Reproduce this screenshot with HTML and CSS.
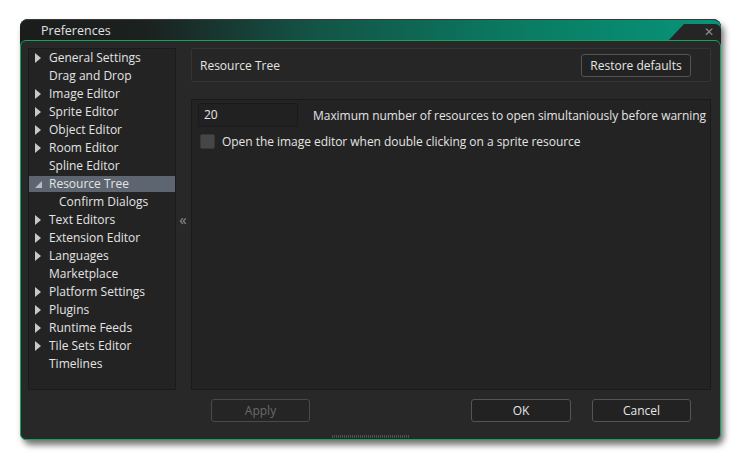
FILE: index.html
```html
<!DOCTYPE html>
<html>
<head>
<meta charset="utf-8">
<link rel="stylesheet" href="styles.css">
</head>
<body>
<div class="window">
  <div class="titlebar">
    <span class="title">Preferences</span>
    <div class="notch"><span class="close">✕</span></div>
  </div>
  <div class="frame">
    <div class="main">
      <div class="tree">
        <div class="row"><span class="tri closed"></span>General Settings</div>
        <div class="row"><span class="tri none"></span>Drag and Drop</div>
        <div class="row"><span class="tri closed"></span>Image Editor</div>
        <div class="row"><span class="tri closed"></span>Sprite Editor</div>
        <div class="row"><span class="tri closed"></span>Object Editor</div>
        <div class="row"><span class="tri closed"></span>Room Editor</div>
        <div class="row"><span class="tri none"></span>Spline Editor</div>
        <div class="row selected"><span class="tri open"></span>Resource Tree</div>
        <div class="row child"><span class="tri none"></span>Confirm Dialogs</div>
        <div class="row"><span class="tri closed"></span>Text Editors</div>
        <div class="row"><span class="tri closed"></span>Extension Editor</div>
        <div class="row"><span class="tri closed"></span>Languages</div>
        <div class="row"><span class="tri none"></span>Marketplace</div>
        <div class="row"><span class="tri closed"></span>Platform Settings</div>
        <div class="row"><span class="tri closed"></span>Plugins</div>
        <div class="row"><span class="tri closed"></span>Runtime Feeds</div>
        <div class="row"><span class="tri closed"></span>Tile Sets Editor</div>
        <div class="row"><span class="tri none"></span>Timelines</div>
      </div>
      <div class="splitter">«</div>
      <div class="right">
        <div class="header">
          <span class="header-title">Resource Tree</span>
          <button class="btn restore">Restore defaults</button>
        </div>
        <div class="content">
          <div class="setting">
            <div class="input">20</div>
            <span class="label">Maximum number of resources to open simultaniously before warning</span>
          </div>
          <div class="setting check-row">
            <span class="checkbox"></span>
            <span class="label">Open the image editor when double clicking on a sprite resource</span>
          </div>
        </div>
      </div>
    </div>
    <div class="buttons">
      <button class="btn apply">Apply</button>
      <div class="spacer"></div>
      <button class="btn ok">OK</button>
      <button class="btn cancel">Cancel</button>
    </div>
    <div class="grip"></div>
  </div>
</div>
</body>
</html>
```
FILE: styles.css
```css
* { box-sizing: border-box; }
html, body { margin: 0; padding: 0; background: #ffffff; }
body {
  font-family: "Open Sans", "Noto Sans", sans-serif;
  font-size: 12px;
  color: #e2e2e2;
  width: 741px;
  height: 460px;
  overflow: hidden;
}
.window {
  position: relative;
  margin: 19px 0 0 20px;
  width: 701px;
  height: 421px;
  border-radius: 8px;
  background: #1c1f1e;
  box-shadow: 3px 5px 6px rgba(0,0,0,0.55);
}
.titlebar {
  position: relative;
  height: 22px;
  border-radius: 8px 8px 0 0;
  border-top: 1px solid #3a3a3a;
  background: linear-gradient(to right, #1a1d1c 0%, #1b211f 18%, #135446 42%, #0a7c62 72%, #07957a 100%);
  display: flex;
  align-items: center;
  padding-left: 21px;
}
.title {
  font-size: 12.5px;
  color: #e0e0e0;
  line-height: 20px;
}
.notch {
  position: absolute;
  right: 0;
  top: 4px;
  width: 54px;
  height: 18px;
  background: #252525;
  clip-path: polygon(17px 0, 100% 0, 100% 100%, 0 100%);
  border-top-right-radius: 6px;
}
.close {
  position: absolute;
  right: 7px;
  top: 1px;
  font-size: 12px;
  color: #8a8a8a;
  font-family: "DejaVu Sans", sans-serif;
}
.frame {
  position: relative;
  height: 400px;
  margin-top: -1px;
  border: 1px solid #18a15f;
  border-radius: 6px;
  background: #282828;
  padding: 7px 9px 0 7px;
}
.main {
  display: flex;
  height: 342px;
}
.tree {
  flex: none;
  width: 148px;
  background: #232323;
  border: 1px solid #1b1b1b;
  padding-top: 1px;
}
.row {
  display: flex;
  align-items: center;
  height: 16px;
  margin-bottom: 2px;
  padding-left: 6px;
  white-space: nowrap;
  color: #e4e4e4;
  line-height: 16px;
}
.row.selected { background: #5d6670; }
.row.child { padding-left: 16px; }
.tri {
  display: inline-block;
  width: 14px;
  height: 8px;
  flex: none;
}
.tri.closed {
  width: 0;
  height: 0;
  border-top: 5px solid transparent;
  border-bottom: 5px solid transparent;
  border-left: 6px solid #c8c8c8;
  margin-right: 8px;
  margin-top: -1px;
}
.tri.open {
  width: 0;
  height: 0;
  border-left: 7px solid transparent;
  border-bottom: 7px solid #b9bcc0;
  margin-right: 7px;
  margin-top: 1px;
}
.splitter {
  flex: none;
  width: 15px;
  display: flex;
  align-items: center;
  justify-content: center;
  color: #8c8c8c;
  font-size: 15px;
  padding-right: 1px;
}
.right {
  flex: 1;
  min-width: 0;
  display: flex;
  flex-direction: column;
}
.header {
  height: 34px;
  background: #262626;
  border: 1px solid #343434;
  border-radius: 2px;
  display: flex;
  align-items: center;
  justify-content: space-between;
  padding: 0 19px 0 8px;
}
.header-title { color: #e4e4e4; }
.btn {
  font-family: "Open Sans", "Noto Sans", sans-serif;
  font-size: 12px;
  color: #e6e6e6;
  background: #222222;
  border: 1px solid #545454;
  border-radius: 3px;
  height: 23px;
  padding: 0;
}
.restore { width: 110px; }
.content {
  margin-top: 17px;
  flex: 1;
  background: #232323;
  border: 1px solid #1a1a1a;
  padding: 3px 6px 0 6px;
}
.setting {
  display: flex;
  align-items: center;
}
.input {
  flex: none;
  width: 100px;
  height: 24px;
  background: #212121;
  border: 1px solid #1a1a1a;
  border-radius: 2px;
  padding-left: 5px;
  line-height: 22px;
  color: #e6e6e6;
  margin-right: 15px;
}
.check-row { margin-top: 6px; padding-left: 2px; }
.checkbox {
  flex: none;
  width: 15px;
  height: 15px;
  background: #464646;
  border: 1px solid #383838;
  border-radius: 2px;
  margin-right: 7px;
}
.label { color: #e4e4e4; white-space: nowrap; letter-spacing: -0.04px; }
.buttons {
  display: flex;
  margin-top: 9px;
  padding-left: 183px;
  padding-right: 20px;
}
.spacer { flex: 1; }
.apply { width: 99px; color: #6a6a6a; border-color: #4a4a4a; background: #252525; }
.ok { width: 100px; margin-right: 21px; }
.cancel { width: 99px; }
.grip {
  position: absolute;
  left: 311px;
  bottom: 1px;
  width: 78px;
  height: 3px;
  background-image: repeating-linear-gradient(to right, #5a5a5a 0 1px, transparent 1px 2px);
  opacity: 0.8;
}
```
